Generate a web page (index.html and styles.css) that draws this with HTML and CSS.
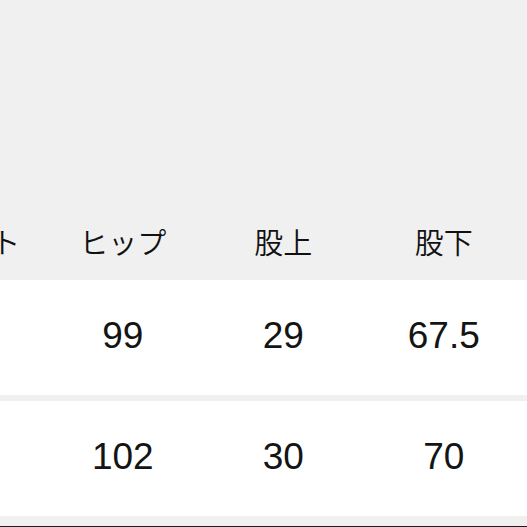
FILE: index.html
```html
<!DOCTYPE html>
<html lang="ja">
<head>
<meta charset="utf-8">
<title>サイズ表</title>
<link rel="stylesheet" href="styles.css">
</head>
<body>
<div class="sheet">
  <div class="table">
    <div class="row head">
      <div class="cell">ウエスト</div>
      <div class="cell">ヒップ</div>
      <div class="cell">股上</div>
      <div class="cell">股下</div>
    </div>
    <div class="row body">
      <div class="cell"></div>
      <div class="cell">99</div>
      <div class="cell">29</div>
      <div class="cell">67.5</div>
    </div>
    <div class="row body">
      <div class="cell"></div>
      <div class="cell">102</div>
      <div class="cell">30</div>
      <div class="cell">70</div>
    </div>
  </div>
</div>
</body>
</html>
```

FILE: styles.css
```css
html, body {
  margin: 0;
  padding: 0;
  background: #f0f0f0;
}
body {
  width: 527px;
  height: 527px;
  overflow: hidden;
}
.sheet {
  width: 527px;
  height: 526px;
  overflow: hidden;
  border-bottom: 1px solid #1c1c1c;
  background: #f0f0f0;
}
.table {
  margin-left: -118px;
  width: 645px;
  display: flex;
  flex-direction: column;
  gap: 6px;
}
.row {
  display: grid;
  grid-template-columns: repeat(3, 160.5px) 1fr;
}
.head {
  height: 280px;
  align-items: end;
  padding-bottom: 24px;
  box-sizing: border-box;
  margin-bottom: -6px;
}
.head .cell {
  font-family: "Noto Sans CJK JP", "Noto Sans", sans-serif;
  font-weight: 350;
  font-size: 29px;
  line-height: 29px;
  color: #111111;
  text-align: center;
  white-space: nowrap;
}
.head .cell:last-child,
.body .cell:last-child {
  width: 160.5px;
}
.body {
  height: 115px;
  background: #ffffff;
  align-items: center;
  padding-bottom: 4px;
  box-sizing: border-box;
}
.body .cell {
  font-family: "Liberation Sans", Arial, sans-serif;
  font-size: 37px;
  line-height: 40px;
  color: #141414;
  text-align: center;
}
```
